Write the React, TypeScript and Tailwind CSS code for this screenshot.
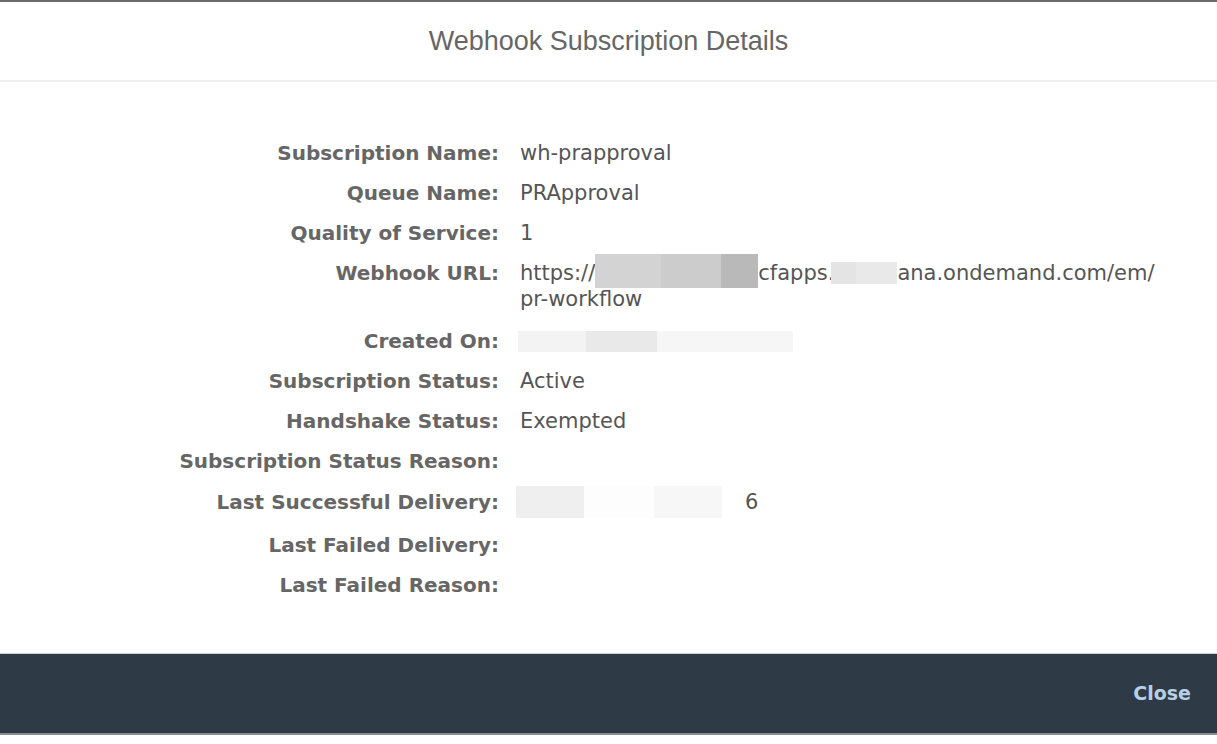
const rows: { label: string; value?: React.ReactNode; extra?: string }[] = [
  { label: 'Subscription Name:', value: 'wh-prapproval' },
  { label: 'Queue Name:', value: 'PRApproval' },
  { label: 'Quality of Service:', value: '1' },
  {
    label: 'Webhook URL:',
    extra: 'pb-[9px]',
    value: (
      <>
        <span className="flex items-center">
          https://
          <span className="-my-[5px] inline-flex h-[34px] -translate-y-[2px]">
            <span className="w-[66px] bg-[#d3d3d3]" />
            <span className="w-[60px] bg-[#cccccc]" />
            <span className="w-[37px] bg-[#b9b9b9]" />
          </span>
          cfapps.
          <span className="-ml-[3px] inline-flex h-[22px]">
            <span className="w-[25px] bg-[#e4e4e4]" />
            <span className="w-[41px] bg-[#e9e9e9]" />
          </span>
          ana.ondemand.com/em/
        </span>
        <span className="block">pr-workflow</span>
      </>
    ),
  },
  {
    label: 'Created On:',
    value: (
      <span className="-ml-[2px] flex h-[26px] items-center">
        <span className="h-[21px] w-[68px] bg-[#f3f3f3]" />
        <span className="h-[21px] w-[71px] bg-[#e9e9e9]" />
        <span className="h-[21px] w-[136px] bg-[#f6f6f6]" />
      </span>
    ),
  },
  { label: 'Subscription Status:', value: 'Active' },
  { label: 'Handshake Status:', value: 'Exempted' },
  { label: 'Subscription Status Reason:', extra: 'pb-[8px]' },
  {
    label: 'Last Successful Delivery:',
    extra: 'pb-[10px]',
    value: (
      <span className="-ml-[4px] flex h-[26px] items-center">
        <span className="-my-[3px] h-[32px] w-[68px] bg-[#efefef]" />
        <span className="-my-[3px] h-[32px] w-[70px] bg-[#fdfdfd]" />
        <span className="-my-[3px] h-[32px] w-[68px] bg-[#f7f7f7]" />
        <span className="ml-[23px]">6</span>
      </span>
    ),
  },
  { label: 'Last Failed Delivery:' },
  { label: 'Last Failed Reason:' },
];

export default function App() {
  return (
    <div
      className="flex h-[744px] w-full flex-col bg-white"
      style={{ fontFamily: '"DejaVu Sans", "Liberation Sans", Arial, sans-serif' }}
    >
      <div className="flex h-[82px] items-center justify-center border-t-2 border-b-2 border-t-[#6a6a6a] border-b-[#f0f0f0]">
        <h1
          className="text-[27px] text-[#666666]"
          style={{ fontFamily: '"Liberation Sans", Arial, sans-serif' }}
        >
          Webhook Subscription Details
        </h1>
      </div>

      <div className="flex-1 pt-[51px]">
        {rows.map((row) => (
          <div
            key={row.label}
            className={`flex pt-[7px] ${row.extra ?? 'pb-[7px]'} leading-[26px]`}
          >
            <div className="w-[499px] shrink-0 text-right text-[20px] font-bold text-[#666666]">
              {row.label}
            </div>
            <div className="ml-[21px] text-[21px] text-[#555555]">{row.value}</div>
          </div>
        ))}
      </div>

      <div className="flex h-[82px] items-center justify-end border-t border-b-2 border-t-[#c9d1d9] border-b-[#8c8c8c] bg-[#2f3a47] pr-[26px]">
        <button className="text-[19px] font-bold text-[#b8d0e6]">Close</button>
      </div>
      <div className="h-[9px]" />
    </div>
  );
}
